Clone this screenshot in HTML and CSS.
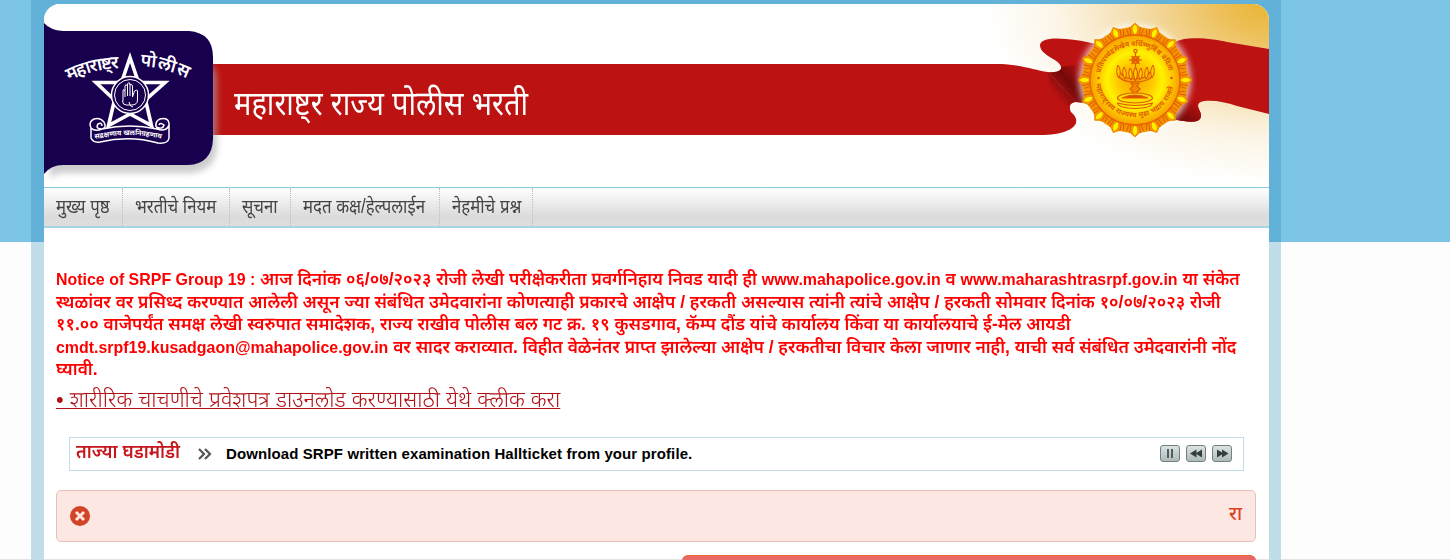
FILE: index.html
```html
<!DOCTYPE html>
<html lang="mr">
<head>
<title>महाराष्ट्र राज्य पोलीस भरती</title>
<meta charset="utf-8">
<link rel="stylesheet" href="styles.css">
</head>
<body>
<div class="wrapper">
	<div class="page">
		<div class="header">
			<svg class="banner" width="1225" height="183" viewBox="44 4 1225 183">
				<defs>
					<radialGradient id="gold" gradientUnits="userSpaceOnUse" cx="0" cy="0" r="1" gradientTransform="translate(1275 0) scale(290 185)">
						<stop offset="0" stop-color="#e9b22c"/>
						<stop offset=".2" stop-color="#edc05a"/>
						<stop offset=".5" stop-color="#f5dfb0"/>
						<stop offset=".75" stop-color="#fcf5e6"/>
						<stop offset="1" stop-color="#fff"/>
					</radialGradient>
					<linearGradient id="fold" gradientUnits="userSpaceOnUse" x1="1052" y1="93" x2="1083" y2="67">
						<stop offset="0" stop-color="#6b0808" stop-opacity="0"/>
						<stop offset=".5" stop-color="#6b0808" stop-opacity=".9"/>
						<stop offset="1" stop-color="#6b0808" stop-opacity="0"/>
					</linearGradient>
					<linearGradient id="fold2" gradientUnits="userSpaceOnUse" x1="1177" y1="122" x2="1192" y2="98">
						<stop offset="0" stop-color="#690707"/>
						<stop offset="1" stop-color="#bd1212"/>
					</linearGradient>
					<radialGradient id="sun">
						<stop offset="0" stop-color="#f7a400"/>
						<stop offset=".35" stop-color="#ffc400"/>
						<stop offset=".62" stop-color="#fff200"/>
						<stop offset=".8" stop-color="#ffcb00"/>
						<stop offset="1" stop-color="#f7a000"/>
					</radialGradient>
					<filter id="soft" x="-30%" y="-30%" width="160%" height="160%"><feGaussianBlur stdDeviation="3"/></filter>
					<g id="ray">
						<path d="M1124 38l2-9 4-2 5-4.500 5 4.500 4 2 2 9z" fill="#f39200"/>
						<path d="M1129.500 27l1.500 8M1140.500 27l-1.500 8M1126.500 29l3 8M1143.500 29l-3 8" stroke="#e05a00" stroke-width=".9"/>
						<path d="M1135 24q5.500 5 0 11.500q-5.500-6.500 0-11.500z" fill="#fff000" stroke="#ef7d00" stroke-width=".6"/>
					</g>
					<path id="arcLeft" d="M69 81Q92 69 122 68"/>
					<path id="arcRight" d="M140 66Q164 67 190 80"/>
					<path id="scroll" d="M95 139Q129 131 163 139"/>
					<path id="sealTop" d="M1100.500 73A35.500 35.500 0 0 1 1169.500 73"/>
					<path id="sealBottom" d="M1096 84A39.500 39.500 0 0 0 1174 84"/>
				</defs>
				<rect x="44" y="4" width="1225" height="183" fill="#fff"/>
				<rect x="980" y="4" width="289" height="183" fill="url(#gold)"/>

				<!-- ribbon -->
				<path d="M1040 45C1041 38 1056 38 1066 39Q1080 40 1096 44V105L1076 102L1048 72C1058 73 1062 70 1061 67C1060 59 1040 56 1040 45Z" fill="#bd1212"/>
				<path d="M200 64H1001C1024 65 1034 70 1048 72L1076 102C1069 103 1069 108 1071 112C1085 124 1070 135 1040 135H200Z" fill="#bd1212"/>
				<path d="M1048 72C1058 73 1062 70 1061 67L1092 62V104L1076 102Q1066 104 1070 110L1050 92Z" fill="url(#fold)"/>
				<path d="M1174 43C1184 35 1215 39 1227 42L1269 49V114L1237 106C1225 102 1215 100 1204 101C1193 103 1201 110 1201 115C1201 125 1188 122 1165 118Z" fill="#bd1212"/>
				<path d="M1160 117L1183 96L1202 101C1193 104 1201 110 1201 115C1201 125 1188 122 1160 117Z" fill="url(#fold2)"/>

				<!-- state seal -->
				<circle cx="1135" cy="80" r="56" fill="#fff" opacity=".7" filter="url(#soft)"/>
				<circle cx="1135" cy="80" r="49" fill="none" stroke="#f59a00" stroke-width="8"/>
				<g>
					<use href="#ray"/>
					<use href="#ray" transform="rotate(22.500 1135 80)"/>
					<use href="#ray" transform="rotate(45 1135 80)"/>
					<use href="#ray" transform="rotate(67.500 1135 80)"/>
					<use href="#ray" transform="rotate(90 1135 80)"/>
					<use href="#ray" transform="rotate(112.500 1135 80)"/>
					<use href="#ray" transform="rotate(135 1135 80)"/>
					<use href="#ray" transform="rotate(157.500 1135 80)"/>
					<use href="#ray" transform="rotate(180 1135 80)"/>
					<use href="#ray" transform="rotate(202.500 1135 80)"/>
					<use href="#ray" transform="rotate(225 1135 80)"/>
					<use href="#ray" transform="rotate(247.500 1135 80)"/>
					<use href="#ray" transform="rotate(270 1135 80)"/>
					<use href="#ray" transform="rotate(292.500 1135 80)"/>
					<use href="#ray" transform="rotate(315 1135 80)"/>
					<use href="#ray" transform="rotate(337.500 1135 80)"/>
				</g>
				<circle cx="1135" cy="80" r="45" fill="url(#sun)" stroke="#e86400" stroke-width="1.300"/>
				<text class="seal-text"><textPath href="#sealTop" textLength="92">प्रतिपच्चंद्रलेखेव वर्धिष्णुर्विश्व वंदिता</textPath></text>
				<text class="seal-text"><textPath href="#sealBottom" textLength="108">महाराष्ट्रस्य राज्यस्य मुद्रा भद्राय राजते</textPath></text>
				<circle cx="1098.500" cy="78" r="1.200" fill="#d95000"/>
				<circle cx="1171.500" cy="78" r="1.200" fill="#d95000"/>
				<g fill="none" stroke="#e05a00" stroke-width="1.200">
					<circle cx="1135.500" cy="51" r="1.600"/>
					<path d="M1135.500 53V66"/>
					<circle cx="1135.500" cy="60" r="3.500" fill="#f08a00"/>
					<path d="M1129 60H1142M1131.500 56L1139.500 64M1139.500 56L1131.500 64"/>
					<path d="M1117 74Q1120 82 1135 82T1154 74L1150 72Q1146 79 1135 79T1120 72Z" fill="#f5a600"/>
					<path d="M1118 65q-3 7 1 13q3-7-1-13zM1124 67q-3 6 1 12q3-6-1-12zM1130 68q-3 6 1 12q3-6-1-12zM1141 68q3 6-1 12q-3-6 1-12zM1147 67q3 6-1 12q-3-6 1-12zM1153 65q3 7-1 13q-3-7 1-13z" fill="#fc0" stroke-width="1"/>
					<path d="M1135.500 67q-4 7 0 14q4-7 0-14z" fill="#fc0"/>
					<path d="M1131 83h8l-2 3 3 3-3 3 2 5h-8l2-5-3-3 3-3z" fill="#f28a00"/>
					<ellipse cx="1135" cy="98" rx="17.500" ry="5" fill="#fd0"/>
					<path d="M1122 98q13-6 26 0z" fill="#d95000"/>
					<path d="M1117.500 103q17.500 5 35 0q-1 5-17.500 5.500q-16.500-.5-17.500-5.500z" fill="#fe0"/>
				</g>

				<!-- police badge -->
				<path d="M50 60H199Q217 62 217 80V146Q216 170 192 173H66Q56 173 50 178Z" fill="#aaa" opacity=".6" filter="url(#soft)"/>
				<path d="M44 23Q50 30 63 31H189Q213 33 213 57V139Q212 164 188 165H63Q51 165 44 174Z" fill="#19004f"/>
				<g fill="none" stroke="#fff">
					<path d="M130 57.500L138.500 82.500H165L145.500 100L151.500 125.500L130 114L108.500 125.500L114.500 100L96 82.500H121.500Z" stroke-width="3.600"/>
					<circle cx="130" cy="95" r="18.500" fill="#19004f" stroke-width="1.500"/>
					<circle cx="130" cy="95" r="15.500" stroke-width="1"/>
					<path d="M123 101V91q0-3 2 0V86q1-3 2.500 0V84q1.500-3 2.500 0V85q1.500-2 2.500 1V97l2-6q3-2 3 0v9q0 5-6 5h-5q-4 0-4-4zM125 91v6M127.500 86v10M130 84v12M132.500 86v10M129 102q1 5 4 5" stroke-width="1"/>
					<path d="M104 122Q100 117 94 119Q88 122 91 128V138Q93 143 100 142Q130 135 158 143Q168 144 169 138V123Q168 117 160 119Q155 121 156 127M91 128Q95 132 102 129Q130 123 157 129Q167 132 169 125M104 122q3 6-2 7q-7 0-4-5q4-2 4 2M156 127q7 3 8-2q-4-3-5 0" stroke-width="1.500"/>
				</g>
				<text class="badge-text"><textPath href="#arcLeft" textLength="52">महाराष्ट्र</textPath></text>
				<text class="badge-text"><textPath href="#arcRight" textLength="49">पोलीस</textPath></text>
				<text class="badge-motto"><textPath href="#scroll" textLength="67">सद्रक्षणाय खलनिग्रहणाय</textPath></text>
			</svg>
			<h1>महाराष्ट्र राज्य पोलीस भरती</h1>
		</div>
		<ul class="menu">
			<li><a>मुख्य पृष्ठ</a></li>
			<li><a>भरतीचे नियम</a></li>
			<li><a>सूचना</a></li>
			<li><a>मदत कक्ष/हेल्पलाईन</a></li>
			<li><a>नेहमीचे प्रश्न</a></li>
		</ul>
		<div class="content">
			<p class="notice">
				<span><i>Notice of SRPF Group 19 :</i> आज दिनांक ०६/०७/२०२३ रोजी लेखी परीक्षेकरीता प्रवर्गनिहाय निवड यादी ही <i>www.mahapolice.gov.in</i> व <i>www.maharashtrasrpf.gov.in</i> या संकेत</span>
				<span>स्थळांवर वर प्रसिध्द करण्यात आलेली असून ज्या संबंधित उमेदवारांना कोणत्याही प्रकारचे आक्षेप / हरकती असल्यास त्यांनी त्यांचे आक्षेप / हरकती सोमवार दिनांक १०/०७/२०२३ रोजी</span>
				<span>११.०० वाजेपर्यंत समक्ष लेखी स्वरुपात समादेशक, राज्य राखीव पोलीस बल गट क्र. १९ कुसडगाव, कॅम्प दौंड यांचे कार्यालय किंवा या कार्यालयाचे ई-मेल आयडी</span>
				<span><i>cmdt.srpf19.kusadgaon@mahapolice.gov.in</i> वर सादर कराव्यात. विहीत वेळेनंतर प्राप्त झालेल्या आक्षेप / हरकतीचा विचार केला जाणार नाही, याची सर्व संबंधित उमेदवारांनी नोंद</span>
				<span>घ्यावी.</span>
			</p>
			<a class="download">• शारीरिक चाचणीचे प्रवेशपत्र डाउनलोड करण्यासाठी येथे क्लीक करा</a>
			<div class="ticker">
				<b class="ticker-title">ताज्या घडामोडी</b>
				<svg class="arrows" width="14" height="12" viewBox="0 0 14 12"><path d="M1 1l5 5-5 5M7 1l5 5-5 5" fill="none" stroke="#555" stroke-width="2.200"/></svg>
				<b class="ticker-text">Download SRPF written examination Hallticket from your profile.</b>
				<div class="controls">
					<i><svg width="18" height="15" viewBox="0 0 18 15"><path d="M7 3v9M11 3v9" stroke="#555e5e" stroke-width="2"/></svg></i>
					<i><svg width="18" height="15" viewBox="0 0 18 15"><path d="M9.500 3.500v8l-6.500-4zM15 3.500v8l-6.500-4z" fill="#343e3e"/></svg></i>
					<i><svg width="18" height="15" viewBox="0 0 18 15"><path d="M4 3.500v8l6.500-4zM9 3.500v8l6.500-4z" fill="#343e3e"/></svg></i>
				</div>
			</div>
			<div class="error">
				<svg width="20" height="20" viewBox="0 0 20 20"><circle cx="10" cy="10" r="10" fill="#d14427"/><path d="M6 6l8 8M14 6l-8 8" stroke="#fde5e0" stroke-width="3"/></svg>
				<div class="marquee">रा</div>
			</div>
			<div class="login"></div>
		</div>
	</div>
</div>
</body>
</html>
```
FILE: styles.css
```css
body {
	margin: 0;
	height: 560px;
	overflow: hidden;
	font-family: "Liberation Sans", "Noto Sans Devanagari", "Noto Sans", sans-serif;
	background: linear-gradient(#7cc5e6 242px, #fdfdfd 242px, #fdfdfd 559px, #e4e4e4 559px);
}
.wrapper {
	box-sizing: border-box;
	width: 1250px;
	height: 560px;
	margin-left: 31px;
	padding: 4px 12px 0 13px;
	background: linear-gradient(#62b1d8 242px, #c1dde9 242px);
}
.page {
	height: 556px;
	overflow: hidden;
	background: linear-gradient(#fff 555px, #e4e4e4 555px);
	border-radius: 16px 16px 0 0;
}
.header {
	position: relative;
	height: 183px;
}
.banner {
	display: block;
}
.header h1 {
	position: absolute;
	left: 190px;
	top: 77px;
	margin: 0;
	color: #fff;
	font-size: 34px;
	font-weight: 400;
	line-height: 44px;
	white-space: nowrap;
	transform: scaleX(.856);
	transform-origin: left;
}
.seal-text {
	font-size: 7px;
	font-weight: bold;
	fill: #e06000;
}
.badge-text {
	font-size: 18px;
	font-weight: 600;
	fill: #fff;
}
.badge-motto {
	font-size: 7px;
	font-weight: bold;
	fill: #fff;
}
.menu {
	box-sizing: border-box;
	display: flex;
	height: 41px;
	margin: 0;
	padding: 0;
	list-style: none;
	border-top: 1px solid #8cc8e2;
	border-bottom: 2px solid #a8d4e6;
	background: linear-gradient(#fff, #dbdbdb 75%, #dedede);
}
.menu li {
	box-sizing: border-box;
	width: 79px;
	padding: 0 0 0 12px;
	color: #444;
	font-size: 19.5px;
	line-height: 37px;
	white-space: nowrap;
	border-right: 1px dotted #bbb;
}
.menu li:nth-child(2) {
	width: 107px;
}
.menu li:nth-child(3) {
	width: 61px;
}
.menu li:nth-child(4) {
	width: 149px;
}
.menu li:nth-child(5) {
	width: 93px;
}
.menu a {
	display: block;
	width: max-content;
	transform: scaleX(.86);
	transform-origin: left;
}
.content {
	padding: 40px 13px 0 12px;
}
.notice {
	margin: 0;
	color: red;
	font-size: 18px;
	font-weight: 600;
	line-height: 22.5px;
}
.notice span {
	display: block;
	width: max-content;
	height: 22.5px;
	white-space: nowrap;
	transform: scaleX(.966);
	transform-origin: left;
}
.notice i {
	font-size: 16.5px;
	font-style: normal;
	line-height: 1;
}
.download {
	display: block;
	width: max-content;
	margin-top: 5px;
	color: #b11116;
	font-size: 22px;
	font-weight: 300;
	line-height: 28px;
	text-decoration: underline;
	text-decoration-thickness: 1px;
	white-space: nowrap;
	transform: scaleX(.988);
	transform-origin: left;
}
.ticker {
	box-sizing: border-box;
	display: flex;
	align-items: center;
	width: 1175px;
	height: 34px;
	margin: 23px 0 0 13px;
	padding: 0 11px 0 6px;
	border: 1px solid #c1dde9;
}
.ticker-title {
	width: 122px;
	color: #c4161c;
	font-size: 19px;
	font-weight: 600;
	white-space: nowrap;
	transform: scaleX(.94);
	transform-origin: left;
}
.arrows {
	margin-right: 14px;
}
.ticker-text {
	color: #000;
	font-size: 15px;
	letter-spacing: .1px;
	white-space: nowrap;
}
.controls {
	display: flex;
	gap: 6px;
	margin-left: auto;
}
.controls i {
	width: 18px;
	height: 15px;
	border: 1px solid #748080;
	border-radius: 3px;
	background: linear-gradient(#dbe3e3, #aebaba);
}
.controls svg {
	display: block;
}
.error {
	box-sizing: border-box;
	display: flex;
	align-items: center;
	justify-content: space-between;
	height: 52px;
	margin-top: 19px;
	padding: 0 13px;
	border: 1px solid #e8bfba;
	border-radius: 5px;
	background: #fde7e2;
}
.marquee {
	color: #d9441f;
	font-size: 19px;
	font-weight: 500;
	white-space: nowrap;
}
.login {
	box-sizing: border-box;
	width: 574px;
	height: 30px;
	margin: 13px 0 0 auto;
	border-top: 1px solid #ee6536;
	border-radius: 6px 6px 0 0;
	background: #e86866;
}
```
